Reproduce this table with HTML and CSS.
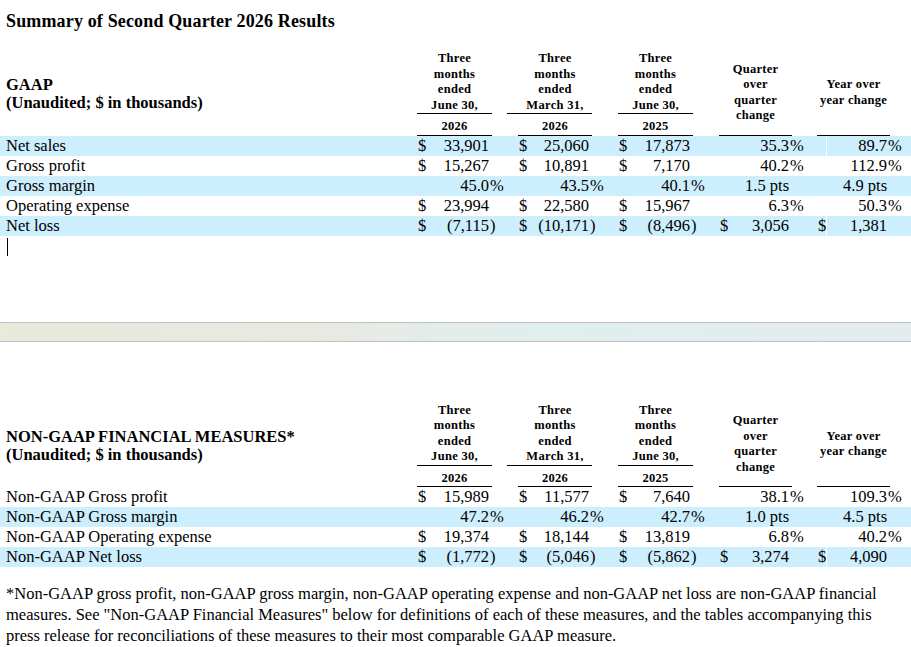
FILE: index.html
```html
<!doctype html>
<html lang="en">
    <head>
        <meta charset="utf-8">
        <title>Summary of Second Quarter 2026 Results</title>
        <link rel="stylesheet" href="styles.css">
    </head>
    <body>
        <h1 class="page__title">Summary of Second Quarter 2026 Results</h1>

        <table class="results results--gaap">
            <colgroup>
                <col class="results__col-label">
                <col class="results__col-cur1"><col class="results__col-num1"><col class="results__col-suf1">
                <col class="results__col-pad2"><col class="results__col-cur2"><col class="results__col-num2"><col class="results__col-suf2">
                <col class="results__col-cur3"><col class="results__col-num3"><col class="results__col-suf3">
                <col class="results__col-cur4"><col class="results__col-num4"><col class="results__col-suf4">
                <col class="results__col-cur5"><col class="results__col-num5"><col class="results__col-suf5">
            </colgroup>
            <thead>
                <tr class="results__head">
                    <th class="results__caption" rowspan="2">GAAP<br>(Unaudited; $ in thousands)</th>
                    <th class="results__period" colspan="2">Three<br>months<br>ended<br>June 30,</th>
                    <th></th>
                    <th class="results__period results__period--wide" colspan="3">Three<br>months<br>ended<br>March 31,</th>
                    <th></th>
                    <th class="results__period" colspan="2">Three<br>months<br>ended<br>June 30,</th>
                    <th></th>
                    <th class="results__period results__period--change" colspan="2" rowspan="2">Quarter<br>over<br>quarter<br>change</th>
                    <th rowspan="2"></th>
                    <th class="results__period results__period--change" colspan="2" rowspan="2">Year over<br>year change</th>
                    <th rowspan="2"></th>
                </tr>
                <tr class="results__head results__head--year">
                    <th class="results__period" colspan="2">2026</th>
                    <th></th>
                    <th></th>
                    <th class="results__period" colspan="2">2026</th>
                    <th></th>
                    <th class="results__period" colspan="2">2025</th>
                    <th></th>
                </tr>
            </thead>
            <tbody>
                <tr class="results__row results__row--shaded results__row--split">
                    <td class="results__label">Net sales</td>
                    <td class="cur">$</td><td class="num">33,901</td><td class="suf"></td>
                    <td></td><td class="cur">$</td><td class="num">25,060</td><td class="suf"></td>
                    <td class="cur">$</td><td class="num">17,873</td><td class="suf"></td>
                    <td class="cur"></td><td class="num">35.3</td><td class="suf">%</td>
                    <td class="cur"></td><td class="num results__yoy">89.7</td><td class="suf">%</td>
                </tr>
                <tr class="results__row">
                    <td class="results__label">Gross profit</td>
                    <td class="cur">$</td><td class="num">15,267</td><td class="suf"></td>
                    <td></td><td class="cur">$</td><td class="num">10,891</td><td class="suf"></td>
                    <td class="cur">$</td><td class="num">7,170</td><td class="suf"></td>
                    <td class="cur"></td><td class="num">40.2</td><td class="suf">%</td>
                    <td class="cur"></td><td class="num results__yoy">112.9</td><td class="suf">%</td>
                </tr>
                <tr class="results__row results__row--shaded">
                    <td class="results__label">Gross margin</td>
                    <td class="cur"></td><td class="num">45.0</td><td class="suf">%</td>
                    <td></td><td class="cur"></td><td class="num">43.5</td><td class="suf">%</td>
                    <td class="cur"></td><td class="num">40.1</td><td class="suf">%</td>
                    <td class="cur"></td><td class="num">1.5 pts</td><td class="suf"></td>
                    <td class="cur"></td><td class="num results__yoy">4.9 pts</td><td class="suf"></td>
                </tr>
                <tr class="results__row">
                    <td class="results__label">Operating expense</td>
                    <td class="cur">$</td><td class="num">23,994</td><td class="suf"></td>
                    <td></td><td class="cur">$</td><td class="num">22,580</td><td class="suf"></td>
                    <td class="cur">$</td><td class="num">15,967</td><td class="suf"></td>
                    <td class="cur"></td><td class="num">6.3</td><td class="suf">%</td>
                    <td class="cur"></td><td class="num results__yoy">50.3</td><td class="suf">%</td>
                </tr>
                <tr class="results__row results__row--shaded results__row--split">
                    <td class="results__label">Net loss</td>
                    <td class="cur">$</td><td class="num">(7,115</td><td class="suf">)</td>
                    <td></td><td class="cur">$</td><td class="num">(10,171</td><td class="suf">)</td>
                    <td class="cur">$</td><td class="num">(8,496</td><td class="suf">)</td>
                    <td class="cur">$</td><td class="num">3,056</td><td class="suf"></td>
                    <td class="cur">$</td><td class="num results__yoy">1,381</td><td class="suf"></td>
                </tr>
            </tbody>
        </table>

        <div class="page__caret"></div>

        <div class="page__divider"></div>

        <table class="results results--non-gaap">
            <colgroup>
                <col class="results__col-label">
                <col class="results__col-cur1"><col class="results__col-num1"><col class="results__col-suf1">
                <col class="results__col-pad2"><col class="results__col-cur2"><col class="results__col-num2"><col class="results__col-suf2">
                <col class="results__col-cur3"><col class="results__col-num3"><col class="results__col-suf3">
                <col class="results__col-cur4"><col class="results__col-num4"><col class="results__col-suf4">
                <col class="results__col-cur5"><col class="results__col-num5"><col class="results__col-suf5">
            </colgroup>
            <thead>
                <tr class="results__head">
                    <th class="results__caption" rowspan="2">NON-GAAP FINANCIAL MEASURES*<br>(Unaudited; $ in thousands)</th>
                    <th class="results__period" colspan="2">Three<br>months<br>ended<br>June 30,</th>
                    <th></th>
                    <th class="results__period results__period--wide" colspan="3">Three<br>months<br>ended<br>March 31,</th>
                    <th></th>
                    <th class="results__period" colspan="2">Three<br>months<br>ended<br>June 30,</th>
                    <th></th>
                    <th class="results__period results__period--change" colspan="2" rowspan="2">Quarter<br>over<br>quarter<br>change</th>
                    <th rowspan="2"></th>
                    <th class="results__period results__period--change" colspan="2" rowspan="2">Year over<br>year change</th>
                    <th rowspan="2"></th>
                </tr>
                <tr class="results__head results__head--year">
                    <th class="results__period" colspan="2">2026</th>
                    <th></th>
                    <th></th>
                    <th class="results__period" colspan="2">2026</th>
                    <th></th>
                    <th class="results__period" colspan="2">2025</th>
                    <th></th>
                </tr>
            </thead>
            <tbody>
                <tr class="results__row">
                    <td class="results__label">Non-GAAP Gross profit</td>
                    <td class="cur">$</td><td class="num">15,989</td><td class="suf"></td>
                    <td></td><td class="cur">$</td><td class="num">11,577</td><td class="suf"></td>
                    <td class="cur">$</td><td class="num">7,640</td><td class="suf"></td>
                    <td class="cur"></td><td class="num">38.1</td><td class="suf">%</td>
                    <td class="cur"></td><td class="num results__yoy">109.3</td><td class="suf">%</td>
                </tr>
                <tr class="results__row results__row--shaded">
                    <td class="results__label">Non-GAAP Gross margin</td>
                    <td class="cur"></td><td class="num">47.2</td><td class="suf">%</td>
                    <td></td><td class="cur"></td><td class="num">46.2</td><td class="suf">%</td>
                    <td class="cur"></td><td class="num">42.7</td><td class="suf">%</td>
                    <td class="cur"></td><td class="num">1.0 pts</td><td class="suf"></td>
                    <td class="cur"></td><td class="num results__yoy">4.5 pts</td><td class="suf"></td>
                </tr>
                <tr class="results__row">
                    <td class="results__label">Non-GAAP Operating expense</td>
                    <td class="cur">$</td><td class="num">19,374</td><td class="suf"></td>
                    <td></td><td class="cur">$</td><td class="num">18,144</td><td class="suf"></td>
                    <td class="cur">$</td><td class="num">13,819</td><td class="suf"></td>
                    <td class="cur"></td><td class="num">6.8</td><td class="suf">%</td>
                    <td class="cur"></td><td class="num results__yoy">40.2</td><td class="suf">%</td>
                </tr>
                <tr class="results__row results__row--shaded results__row--split">
                    <td class="results__label">Non-GAAP Net loss</td>
                    <td class="cur">$</td><td class="num">(1,772</td><td class="suf">)</td>
                    <td></td><td class="cur">$</td><td class="num">(5,046</td><td class="suf">)</td>
                    <td class="cur">$</td><td class="num">(5,862</td><td class="suf">)</td>
                    <td class="cur">$</td><td class="num">3,274</td><td class="suf"></td>
                    <td class="cur">$</td><td class="num results__yoy">4,090</td><td class="suf"></td>
                </tr>
            </tbody>
        </table>

        <p class="page__note">*Non-GAAP gross profit, non-GAAP gross margin, non-GAAP operating expense and non-GAAP net loss are non-GAAP financial measures. See "Non-GAAP Financial Measures" below for definitions of each of these measures, and the tables accompanying this press release for reconciliations of these measures to their most comparable GAAP measure.</p>
    </body>
</html>
```

FILE: styles.css
```css
body {
    background: #fff;
    color: #000;
    font-family: "Liberation Serif", "Times New Roman", serif;
    margin: 0;
}

.page__title {
    font-size: 18px;
    font-weight: bold;
    letter-spacing: 0.15px;
    line-height: 22px;
    margin: 10px 0 0 6px;
}

.page__caret {
    background: #000;
    height: 18px;
    margin: 2px 0 0 7px;
    width: 1px;
}

.page__divider {
    background: linear-gradient(90deg, #e9e9dc 0%, #e8eae2 35%, #e0eeee 60%, #e3ebef 100%);
    border-bottom: 1px solid #c3c3c3;
    border-top: 1px solid #c3c3c3;
    height: 18px;
    margin-top: 66px;
}

.page__note {
    font-size: 16.5px;
    line-height: 21px;
    margin: 16px 6px 0 6px;
}

/* tables */

.results {
    border-collapse: separate;
    border-spacing: 0;
    table-layout: fixed;
    width: 911px;
}

.results--gaap {
    margin-top: 19px;
}

.results--non-gaap {
    margin-top: 61px;
}

.results__col-label { width: 417px; }
.results__col-cur1 { width: 11px; }
.results__col-num1 { width: 64px; }
.results__col-suf1 { width: 15px; }
.results__col-pad2 { width: 11px; }
.results__col-cur2 { width: 12px; }
.results__col-num2 { width: 62px; }
.results__col-suf2 { width: 26px; }
.results__col-cur3 { width: 12px; }
.results__col-num3 { width: 63px; }
.results__col-suf3 { width: 26px; }
.results__col-cur4 { width: 12px; }
.results__col-num4 { width: 61px; }
.results__col-suf4 { width: 25px; }
.results__col-cur5 { width: 9px; }
.results__col-num5 { width: 64px; }
.results__col-suf5 { width: 21px; }

.results th,
.results td {
    padding: 0;
    white-space: nowrap;
}

.results__head th {
    font-size: 12.5px;
    font-weight: bold;
    letter-spacing: 0.3px;
    line-height: 15.5px;
    text-align: center;
    vertical-align: bottom;
}

.results__head--year th {
    padding-top: 5px;
}

.results__period {
    border-bottom: 1px solid #000;
}

.results__period--wide {
    padding-left: 11px !important;
}

.results__period--change {
    vertical-align: middle !important;
}

.results__head .results__caption {
    font-size: 16.5px;
    letter-spacing: 0;
    line-height: 18px;
    padding: 2px 0 0 6px;
    text-align: left;
    vertical-align: middle;
}

.results__row td {
    font-size: 16.5px;
    height: 20px;
    line-height: 20px;
}

.results__row--shaded {
    background: #cdeefc;
}

.results__row--split .results__yoy {
    border-left: 1px solid #fff;
}

.results__label {
    padding-left: 6px !important;
}

.cur {
    padding-left: 1px !important;
    text-align: left;
}

.num {
    padding-right: 3px !important;
    text-align: right;
}

.suf {
    text-align: left;
    text-indent: -2px;
}
```
